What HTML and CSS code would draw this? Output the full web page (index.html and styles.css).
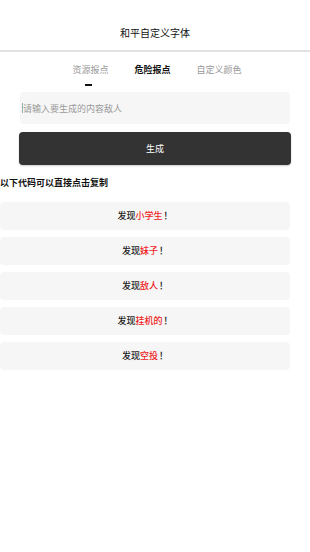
FILE: index.html
```html
<!DOCTYPE html>
<html lang="zh-CN">
<head>
    <meta charset="UTF-8">
    <meta name="viewport" content="width=device-width, initial-scale=1.0">
    <title>和平自定义字体</title>
    <link rel="stylesheet" href="styles.css">
</head>
<body>
    <div class="header">和平自定义字体</div>

    <div class="tabs">
        <div class="tab">资源报点<span class="indicator"></span></div>
        <div class="tab active">危险报点</div>
        <div class="tab">自定义颜色</div>
    </div>

    <div class="form">
        <div class="input-box">
            <span class="cursor"></span>
            <input type="text" placeholder="请输入要生成的内容敌人">
        </div>
        <button class="gen-btn">生成</button>
    </div>

    <div class="tip">以下代码可以直接点击复制</div>

    <div class="list">
        <div class="item">发现<span class="red">小学生</span><span class="mark">！</span></div>
        <div class="item">发现<span class="red">妹子</span><span class="mark">！</span></div>
        <div class="item">发现<span class="red">敌人</span><span class="mark">！</span></div>
        <div class="item">发现<span class="red">挂机的</span><span class="mark">！</span></div>
        <div class="item">发现<span class="red">空投</span><span class="mark">！</span></div>
    </div>
</body>
</html>
```

FILE: styles.css
```css
body {
    margin: 0;
    background-color: #fff;
    font-family: "Noto Sans CJK SC", "Noto Sans", sans-serif;
    color: #222;
}

.header {
    height: 52px;
    line-height: 66px;
    box-sizing: border-box;
    text-align: center;
    font-size: 10px;
    color: #111;
    border-bottom: 2px solid #e2e2e2;
    overflow: hidden;
}

.tabs {
    display: flex;
    justify-content: center;
    gap: 26px;
    padding-top: 11px;
    height: 28px;
    box-sizing: border-box;
    margin-left: 4px;
}

.tab {
    position: relative;
    font-size: 9px;
    line-height: 14px;
    color: #999;
}

.tab.active {
    color: #111;
    font-weight: bold;
}

.indicator {
    position: absolute;
    left: 13px;
    top: 21px;
    width: 7px;
    height: 2px;
    background-color: #111;
}

.form {
    padding: 12px 19px 0 19px;
}

.input-box {
    display: flex;
    align-items: center;
    height: 32px;
    margin-left: 1px;
    margin-right: 1px;
    background-color: #f6f6f6;
    border-radius: 4px;
    padding-left: 2px;
}

.cursor {
    width: 1px;
    height: 10px;
    background-color: #8fb3b0;
}

.input-box input {
    flex: 1;
    border: none;
    background: transparent;
    outline: none;
    font-family: "Noto Sans CJK SC", sans-serif;
    font-size: 9px;
    padding: 0;
    color: #333;
}

.input-box input::placeholder {
    color: #9a9a9a;
}

.gen-btn {
    display: block;
    width: 100%;
    height: 33px;
    margin-top: 8px;
    border: none;
    border-radius: 4px;
    background-color: #333;
    color: #fff;
    font-family: "Noto Sans CJK SC", sans-serif;
    font-size: 9px;
    box-shadow: 0 1px 2px rgba(0, 0, 0, 0.2);
}

.tip {
    margin-top: 11px;
    font-size: 9px;
    font-weight: bold;
    line-height: 14px;
    color: #111;
}

.list {
    display: flex;
    flex-direction: column;
    gap: 7px;
    width: 290px;
    margin-top: 12px;
}

.item {
    height: 28px;
    line-height: 28px;
    text-align: center;
    font-size: 9px;
    font-weight: 500;
    color: #222;
    background-color: #f6f6f6;
    border-radius: 4px;
}

.red {
    color: #ee1c1c;
}

.mark {
    font-family: "Noto Sans CJK TC", sans-serif;
    margin-left: 1px;
}
```
